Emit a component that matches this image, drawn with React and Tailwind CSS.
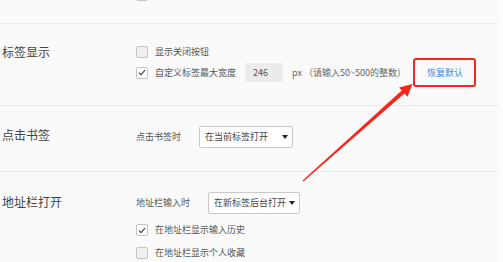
const Checkbox = ({ checked }) => (
  <span
    className={`w-[12px] h-[12px] shrink-0 rounded-[2px] border border-[#c4c4c4] flex items-center justify-center ${
      checked ? 'bg-white' : 'bg-[#f1f1f1]'
    }`}
  >
    {checked && (
      <svg width="8" height="7" viewBox="0 0 8 7" fill="none">
        <path d="M1 3.6l2 2 4-4.4" stroke="#444" strokeWidth="1.2" />
      </svg>
    )}
  </span>
);

const CheckRow = ({ checked, label }) => (
  <div className="h-[12px] flex items-center gap-[7px]">
    <Checkbox checked={checked} />
    <span className="text-[9px] leading-[12px] text-[#555]">{label}</span>
  </div>
);

const Select = ({ value, width }) => (
  <div
    className={`${width} h-[22px] bg-white border border-[#c9c9c9] rounded-[2px] flex items-center justify-between pl-[5px] pr-[4px]`}
  >
    <span className="text-[9px] text-[#444] whitespace-nowrap">{value}</span>
    <svg width="6" height="4" viewBox="0 0 6 4">
      <path d="M0 0h6L3 4z" fill="#222" />
    </svg>
  </div>
);

const Section = ({ title, titlePad, children, last }) => (
  <div className={`flex ${last ? '' : 'border-b border-[#eaeaea]'}`}>
    <div className={`w-[136px] shrink-0 pl-[2px] ${titlePad}`}>
      <span className="block text-[12px] leading-[16px] text-[#444]">{title}</span>
    </div>
    <div className="flex-1">{children}</div>
  </div>
);

export default function App() {
  return (
    <div
      className="relative w-[503px] h-[262px] overflow-hidden bg-[#fcfcfc]"
      style={{ fontFamily: '"Noto Sans CJK SC", "Noto Sans", sans-serif' }}
    >
      <div className="w-[498px] h-full bg-[#fafafa]">
        {/* cut-off row from the previous section */}
        <div className="h-[24px] border-b border-[#eaeaea] flex">
          <div className="w-[136px] shrink-0" />
          <div className="-mt-[11px]">
            <Checkbox />
          </div>
        </div>

        <Section title="标签显示" titlePad="pt-[20px]">
          <div className="pt-[22px] pb-[18px]">
            <CheckRow label="显示关闭按钮" />
            <div className="h-[29px] flex items-center">
              <Checkbox checked />
              <span className="ml-[7px] text-[9px] text-[#555] whitespace-nowrap">自定义标签最大宽度</span>
              <span className="ml-[9px] w-[38px] h-[19px] rounded-[2px] bg-[#ebebeb] pl-[8px] text-[9px] leading-[19px] text-[#555]">
                246
              </span>
              <span className="ml-[9px] w-[110px] shrink-0 text-[9px] text-[#666] whitespace-nowrap">
                px （请输入50~500的整数）
              </span>
              <button className="ml-[11px] w-[63px] h-[29px] border-2 border-[#f8261a] rounded-[3px] pl-[12px] text-left text-[9px] text-[#3b8ae8]">
                恢复默认
              </button>
            </div>
          </div>
        </Section>

        <Section title="点击书签" titlePad="pt-[21px]">
          <div className="pt-[20px] pb-[23px] flex items-center gap-[18px]">
            <span className="text-[9px] text-[#555]">点击书签时</span>
            <Select value="在当前标签打开" width="w-[94px]" />
          </div>
        </Section>

        <Section title="地址栏打开" titlePad="pt-[22px]" last>
          <div className="pt-[20px]">
            <div className="flex items-center gap-[18px]">
              <span className="text-[9px] text-[#555]">地址栏输入时</span>
              <Select value="在新标签后台打开" width="w-[92px]" />
            </div>
            <div className="mt-[10px] flex flex-col gap-[11px]">
              <CheckRow checked label="在地址栏显示输入历史" />
              <CheckRow label="在地址栏显示个人收藏" />
            </div>
          </div>
        </Section>
      </div>

      <svg className="absolute inset-0 pointer-events-none" width="503" height="262" viewBox="0 0 503 262">
        <polygon
          points="412.5,84 399,87.5 401.7,90.5 302.6,180.6 303.4,181.6 404.4,93.6 407.5,96.8"
          fill="#f8261a"
        />
      </svg>
    </div>
  );
}
